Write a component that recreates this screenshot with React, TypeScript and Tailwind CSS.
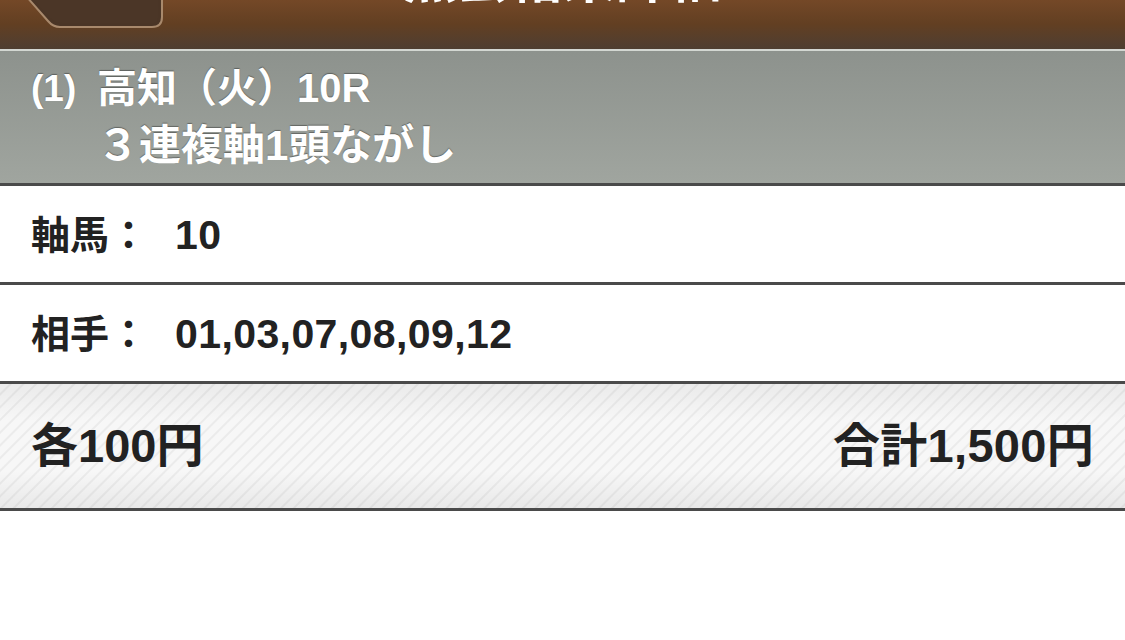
const rows = [
  { label: '軸馬', value: '10' },
  { label: '相手', value: '01,03,07,08,09,12' },
];

function BackButton() {
  return (
    <svg
      className="absolute left-[20px] top-0"
      width="150"
      height="32"
      viewBox="0 0 150 32"
    >
      <path
        d="M6 -4 L28 21 Q33 27 40 27 L132 27 Q142 27 142 17 L142 -4 Z"
        fill="#4a3526"
        stroke="#a8896c"
        strokeWidth="2"
      />
      <path d="M10 -4 L30 18 Q35 23 42 23 L134 23 Q138 23 138 18 L138 -4 Z" fill="#4b3627" />
    </svg>
  );
}

export default function App() {
  return (
    <div className="w-[1125px] h-[640px] overflow-hidden bg-white font-['Liberation_Sans','Noto_Sans_CJK_JP',sans-serif] font-bold">
      <header className="relative h-[49px] overflow-hidden flex justify-center bg-gradient-to-b from-[#744827] via-[#623f22] to-[#4e3e31]">
        <BackButton />
        <h1 className="-mt-[47px] text-[53px] leading-[53px] text-white">照会結果詳細</h1>
      </header>
      <div className="h-[2px] bg-[#d3d7d2]" />

      <section className="h-[132px] px-[31px] pt-[9px] bg-gradient-to-b from-[#8d928d] to-[#a0a59f] text-white leading-[57px] [text-shadow:0_-1px_1px_rgba(0,0,0,0.35)]">
        <div className="flex text-[40px]">
          <span className="w-[66px] text-[37px]">(1)</span>
          <span>高知（火）10R</span>
        </div>
        <div className="pl-[66px] text-[42px]">３連複軸1頭ながし</div>
      </section>
      <div className="h-[3px] bg-[#4a4a4a]" />

      {rows.map((row) => (
        <div key={row.label}>
          <div className="h-[96px] flex items-center px-[31px] pt-[4px] text-[#222]">
            <span className="w-[144px] text-[39px]">{row.label}：</span>
            <span className="text-[41px] tracking-[0.4px]">{row.value}</span>
          </div>
          <div className="h-[3px] bg-[#4a4a4a]" />
        </div>
      ))}

      <footer className="h-[124px] flex items-center justify-between px-[31px] text-[#222] text-[47px] bg-[linear-gradient(to_bottom,rgba(0,0,0,0.05),rgba(255,255,255,0)_30%,rgba(255,255,255,0)_70%,rgba(0,0,0,0.06)),repeating-linear-gradient(135deg,#f7f7f7_0px,#f7f7f7_6px,#ebebeb_7px,#ebebeb_8px,#f7f7f7_9px)]">
        <span>各100円</span>
        <span className="tracking-[0.3px]">合計1,500円</span>
      </footer>
      <div className="h-[3px] bg-[#4a4a4a]" />
    </div>
  );
}
